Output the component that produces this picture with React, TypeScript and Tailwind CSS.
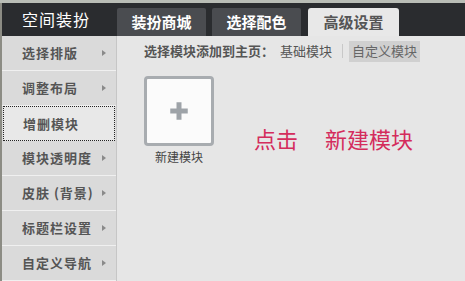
import { Plus } from "lucide-react";

const font = "font-['Noto_Sans_CJK_SC','Noto_Sans',sans-serif]";

const tabs = ["装扮商城", "选择配色", "高级设置"];

const menu = [
  { label: "选择排版", arrow: true },
  { label: "调整布局", arrow: true },
  { label: "增删模块", arrow: false, active: true },
  { label: "模块透明度", arrow: true },
  { label: "皮肤 (背景)", arrow: true },
  { label: "标题栏设置", arrow: true },
  { label: "自定义导航", arrow: true },
];

const Arrow = () => (
  <svg width="4" height="6" viewBox="0 0 4 6" className="shrink-0">
    <path d="M0 0 L4 3 L0 6 Z" fill="#8a8a8a" />
  </svg>
);

export default function App() {
  return (
    <div className={`w-[465px] h-[281px] overflow-hidden bg-[#e6e6e6] flex flex-col ${font}`}>
      {/* header */}
      <div className="h-[3px] bg-[#b9bdb6]" />
      <div className="h-[35px] bg-[#2a2c2f] flex items-end border-l-2 border-[#8c8c84]">
        <div className="w-[115px] h-full flex items-center pl-[20px] text-white text-[16px] tracking-[1px]">
          空间装扮
        </div>
        <div className="flex items-end gap-[6px] h-full">
          {tabs.map((t, i) =>
            i === 2 ? (
              <div
                key={t}
                className="w-[91px] h-[28px] bg-[#e8e8e8] rounded-t-[3px] flex items-center justify-center text-[15px] font-bold text-[#555] ml-[1px]"
              >
                {t}
              </div>
            ) : (
              <div
                key={t}
                className="w-[89px] h-[28px] bg-[#4a4c50] rounded-t-[2px] flex items-center justify-center text-[15px] font-bold text-white"
              >
                {t}
              </div>
            )
          )}
        </div>
      </div>

      <div className="flex flex-1">
        {/* sidebar */}
        <div className="w-[117px] bg-[#dadada] border-l-2 border-[#8c8c84] border-r border-r-[#c6c6c6] flex flex-col">
          {menu.map((m) =>
            m.active ? (
              <div
                key={m.label}
                className="h-[35px] shrink-0 flex items-center mx-[1px] pl-[19px] text-[13px] tracking-[1px] font-bold text-[#555] bg-[#e8e8e8] border border-dotted border-[#222]"
              >
                {m.label}
              </div>
            ) : (
              <div
                key={m.label}
                className="h-[35px] shrink-0 flex items-center justify-between pl-[20px] pr-[10px] text-[13px] tracking-[1px] font-bold text-[#555] border-b border-[#f0f0f0]"
              >
                <span>{m.label}</span>
                {m.arrow && <Arrow />}
              </div>
            )
          )}
        </div>

        {/* content */}
        <div className="flex-1 bg-[#e6e6e6] pl-[27px] pt-[5px]">
          <div className="flex items-center h-[20px] text-[13px]">
            <span className="font-bold text-[#555]">选择模块添加到主页：</span>
            <span className="ml-[6px] text-[#555]">基础模块</span>
            <span className="ml-[10px] w-px h-[14px] bg-[#c8c8c8]" />
            <span className="ml-[6px] px-[3px] h-[21px] flex items-center bg-[#d0d0d0] text-[#666]">
              自定义模块
            </span>
          </div>

          <div className="flex items-start mt-[15px]">
            <div className="flex flex-col items-center">
              <div className="w-[70px] h-[70px] bg-[#fbfbfb] border-[3px] border-[#a8acb0] rounded-[4px] flex items-center justify-center">
                <Plus className="w-[30px] h-[30px] text-[#9ea3a8]" strokeWidth={4} strokeLinecap="butt" />
              </div>
              <span className="mt-[2px] text-[12px] text-[#444]">新建模块</span>
            </div>
            <div className="ml-[40px] mt-[46px] text-[22px] text-[#d42c5c]">
              点击<span className="ml-[27px]">新建模块</span>
            </div>
          </div>
        </div>
      </div>
    </div>
  );
}
